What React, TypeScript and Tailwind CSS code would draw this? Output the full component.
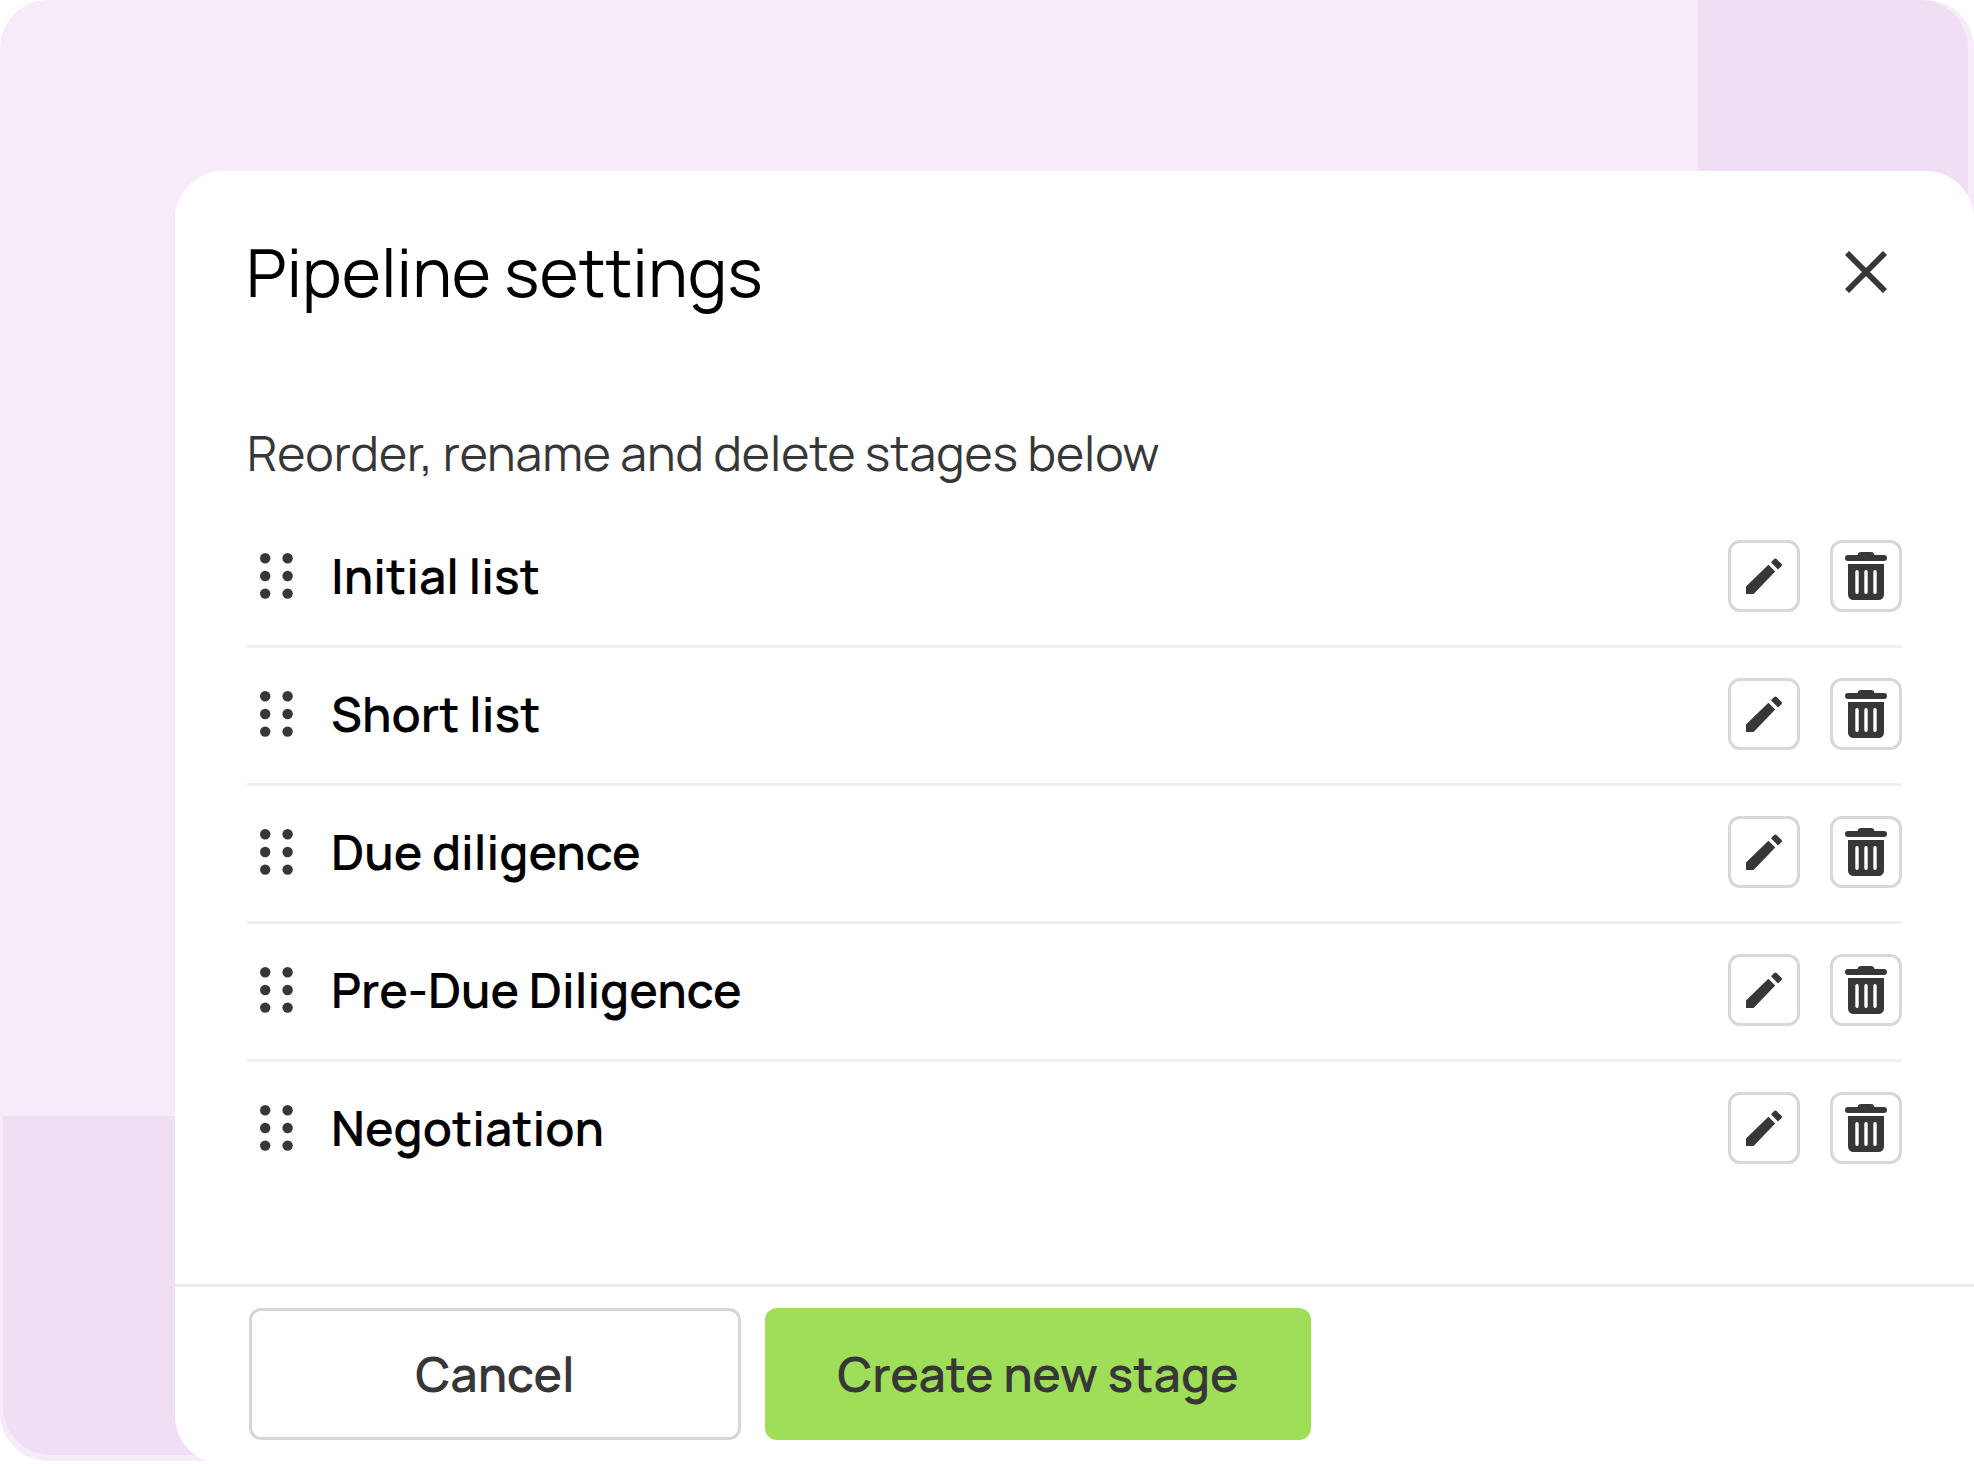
import React from 'react';

const STAGES = ['Initial list', 'Short list', 'Due diligence', 'Pre-Due Diligence', 'Negotiation'];

// 1. Icons
const CloseIcon: React.FC = () => (
  <svg width="42" height="42" viewBox="0 0 42 42" stroke="currentColor" strokeWidth="5.8" aria-hidden="true">
    <path d="M2 2 40 40M40 2 2 40" />
  </svg>
);

const DragIcon: React.FC = () => (
  <svg width="33" height="46" viewBox="0 0 33 46" fill="currentColor" aria-hidden="true">
    {[5.2, 23, 40.6].map((cy) => (
      <React.Fragment key={cy}>
        <circle cx="5.2" cy={cy} r="5.2" />
        <circle cx="27.6" cy={cy} r="5.2" />
      </React.Fragment>
    ))}
  </svg>
);

const PencilIcon: React.FC = () => (
  <svg width="36" height="36" viewBox="0 0 36 36" fill="currentColor" aria-hidden="true">
    <path d="M22.4 6.8 29.2 13.6 7.6 36H0v-7.4z" />
    <path d="M25 4.2 28.2 1q1.2-1.2 2.4 0l4.8 4.8q1.2 1.2 0 2.4L32 11.6z" />
  </svg>
);

const TrashIcon: React.FC = () => (
  <svg width="42" height="48" viewBox="0 0 42 48" fill="currentColor" aria-hidden="true">
    <path d="M12.5 3q.6-3 3.5-3h10q2.9 0 3.5 3H39a3 3 0 0 1 0 6H3a3 3 0 0 1 0-6z" />
    <path
      fillRule="evenodd"
      d="M3 12h36v30.5a5.5 5.5 0 0 1-5.5 5.5h-25A5.5 5.5 0 0 1 3 42.5zM10.3 19.7v20.6a1.7 1.7 0 0 0 3.4 0V19.7a1.7 1.7 0 0 0-3.4 0zM19.3 19.7v20.6a1.7 1.7 0 0 0 3.4 0V19.7a1.7 1.7 0 0 0-3.4 0zM28.3 19.7v20.6a1.7 1.7 0 0 0 3.4 0V19.7a1.7 1.7 0 0 0-3.4 0z"
    />
  </svg>
);

// 2. Square outlined button at the end of each stage
interface IconButtonProps {
  label: string;
  children: React.ReactNode;
}

const IconButton: React.FC<IconButtonProps> = ({ label, children }) => (
  <button
    type="button"
    aria-label={label}
    className="flex size-[72px] shrink-0 items-center justify-center rounded-xl border-3 border-[#d8d8d8] bg-white"
  >
    {children}
  </button>
);

// 3. One stage of the pipeline
interface StageRowProps {
  name: string;
}

const StageRow: React.FC<StageRowProps> = ({ name }) => (
  <li className="flex items-center border-b-3 border-[#efefef] pt-[30px] pb-[33px] last:border-b-0">
    <button type="button" aria-label={`Move ${name}`} className="ml-[13px] mr-[38px] shrink-0 cursor-grab">
      <DragIcon />
    </button>
    <span className="grow text-5xl font-semibold text-black">{name}</span>
    <div className="flex gap-[30px]">
      <IconButton label={`Rename ${name}`}>
        <PencilIcon />
      </IconButton>
      <IconButton label={`Delete ${name}`}>
        <TrashIcon />
      </IconButton>
    </div>
  </li>
);

export default function App() {
  return (
    <div className="relative bg-white pt-[171px] pl-[175px] font-['Manrope','Inter',sans-serif] text-[#373737] [font-variant-ligatures:none]">
      {/* Backdrop with the two darker blocks */}
      <div className="absolute inset-x-0 top-0 bottom-[3px] overflow-hidden rounded-[48px] bg-[#f7ebfa]">
        <div className="absolute top-0 right-1.5 h-[300px] w-[270px] rounded-tr-[48px] bg-[#f0dff4]" />
        <div className="absolute bottom-1.5 left-[3px] h-[339px] w-[270px] rounded-bl-[48px] bg-[#f0dff4]" />
      </div>

      <section className="relative rounded-[48px] bg-white">
        <header className="flex items-center justify-between pt-[53px] pr-[87px] pl-[71px]">
          <h1 className="text-[67px] leading-[96px] font-normal text-black">Pipeline settings</h1>
          <button type="button" aria-label="Close">
            <CloseIcon />
          </button>
        </header>

        <div className="px-[72px] pt-[103px] pb-[87px]">
          <p className="text-5xl leading-[60px] font-normal">Reorder, rename and delete stages below</p>
          <ul className="pt-[27px]">
            {STAGES.map((stage) => (
              <StageRow key={stage} name={stage} />
            ))}
          </ul>
        </div>

        <footer className="flex gap-6 border-t-3 border-[#ececec] px-[74px] pt-[21px] pb-6 text-5xl font-semibold">
          <button type="button" className="h-[132px] w-[492px] rounded-xl border-3 border-[#d6d6d6] bg-white">
            Cancel
          </button>
          <button type="button" className="h-[132px] w-[546px] rounded-xl bg-[#9fde58]">
            Create new stage
          </button>
        </footer>
      </section>
    </div>
  );
}
